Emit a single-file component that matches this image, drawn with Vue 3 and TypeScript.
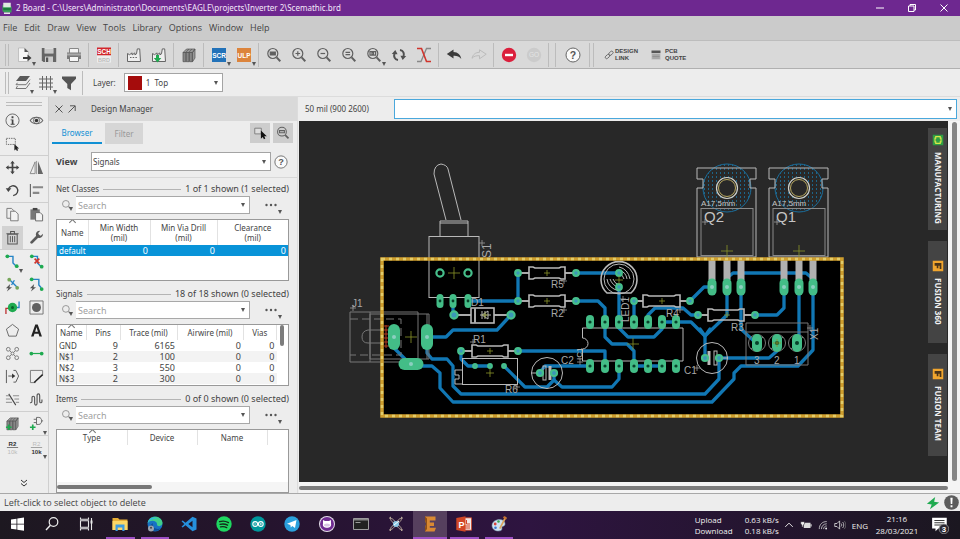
<script setup lang="ts">
import { ref } from 'vue'

interface Tool { id: string; label: string; caret?: boolean; active?: boolean }
interface Signal { name: string; pins: number; trace: number; airwire: number; vias: number }

const menus: string[] = ['File', 'Edit', 'Draw', 'View', 'Tools', 'Library', 'Options', 'Window', 'Help']

const lens = (inner: string): string =>
  `<g fill="none" stroke="#606060" stroke-width="1.2"><circle cx="6.8" cy="6.5" r="5"/><path d="M10.6 10.4L14.3 14.2" stroke-width="2"/>${inner}</g>`
const dot = (x: number, y: number, c = '#1faa50'): string => `<circle cx="${x}" cy="${y}" r="2" fill="${c}"/>`
const plus = '<path d="M1 12h6M4 9v6" stroke="#1faa50" stroke-width="1.8"/>'
const bolt = '<path d="M5.5 7.5L1 12h2.6L2 15.5 7.5 11H4.8z" fill="#555"/>'
const factory = 'M1.5 14.5v-8l2 1.2 2.6-1.8v2l2.8-2v2l1.6-1 .8-5h2.4l.8 12.6z'
const cube = '<path d="M2 5.5L5.5 2H14l-2.5 3.5zM11.5 5.5L14 2v9l-2.5 3.8z" fill="#999" stroke="#555" stroke-width=".7"/><path d="M2 5.5h2.8v9.2H2zM5.2 5.5H8v9.2H5.2zM8.5 5.5h2.8v9.2H8.5z" fill="#888" stroke="#505050" stroke-width=".7"/><path d="M5 5.2L8 2M8 5.2L11 2" stroke="#555" stroke-width=".7"/>'
const badge = (color: string, text: string): string =>
  `<path d="M1 1h14v14H1z" fill="${color}"/><text x="8" y="10.5" text-anchor="middle" font-size="6.5" font-weight="700" fill="#fff">${text}</text>`

const icons: Record<string, string> = {
  new: '<path d="M2.5 1h6l4 4v9.500h-10z" fill="#f5f5f5" stroke="#aaa" stroke-width=".6"/><path d="M8.500 1l4 4h-4z" fill="#555"/><path d="M7 10h4.500V7.500L15.500 11l-4 3.300V12H7z" fill="#3c3c3c"/>',
  save: '<path d="M.8 1h14.400v14H2.300L.8 13.500z" fill="#666"/><path d="M3.500 1h9v5.500h-9z" fill="#ddd"/><path d="M3.500 3h9M3.500 5h9" stroke="#999" stroke-width=".6"/><path d="M4 9.500h8V15H4z" fill="#ccc"/><path d="M5 10.500h2.200V15H5z" fill="#555"/>',
  print: '<path d="M3.500 1.500h9v5h-9z" fill="#f4f4f4" stroke="#888"/><path d="M1 5.500h14V12H1z" fill="#7a7a7a"/><path d="M1 6.500h14v2H1z" fill="#aaa"/><path d="M3.500 9.500h9v5h-9z" fill="#f6f6f6" stroke="#777"/>',
  sch: '<path d="M1 .5h14v8H1z" fill="#d2262b"/><path d="M1 8.500h14v7H1z" fill="#eee"/><text x="8" y="7" text-anchor="middle" font-size="6.500" font-weight="700" fill="#fff">SCH</text><text x="8" y="14.500" text-anchor="middle" font-size="5.500" font-weight="700" fill="#bbb">BRD</text>',
  fab: `<path d="${factory}" fill="#eee" stroke="#666"/><path d="M4 10.500h7" stroke="#666" stroke-dasharray="1.500 1.200"/>`,
  fabDown: `<path d="${factory}" fill="#eee" stroke="#666"/><path d="M5 8h3v3h2.300L6.500 15.500 2.800 11H5z" fill="#1faa50"/>`,
  library: cube,
  scr: badge('#2272b9', 'SCR'),
  ulp: badge('#dc843c', 'ULP'),
  zoomFit: lens('<path d="M4.300 5h5v3h-5z" fill="#606060"/>'),
  zoomIn: lens('<path d="M4.500 6.500h4.600M6.800 4.200v4.600"/>'),
  zoomOut: lens('<path d="M4.500 6.500h4.600"/>'),
  zoomRedraw: lens('<path d="M4.500 5.400h4.600M4.500 7.700h4.600"/>'),
  zoomSelect: lens('<path d="M4 4.700h5.600v3.500H4z" /><path d="M6 5.500h1.500v1.800H6z"/>'),
  refresh: '<g fill="none" stroke="#505050" stroke-width="2"><path d="M7 13C3.500 12.500 2.500 9.500 3.500 6.500M9 3c3.500.5 4.500 3.500 3.500 6.500"/></g><path d="M.8 7L4.300 3l2.300 4.300zM15.200 9l-3.500 4-2.300-4.300z" fill="#505050"/>',
  ratsnest: '<g fill="none" stroke-width="1.300"><path d="M1 14.500h4L10.500 1.500H15" stroke="#888"/><path d="M1 1.500h4.500l5 13H15" stroke="#d0342c" stroke-width="1.600"/></g>',
  undo: '<path d="M.8 7L7.500 2.500V5c4.500.3 7 2.500 7.800 7-2-2.600-4.200-3.300-7.800-3.200v2.700z" fill="#3c3c3c"/>',
  redo: '<path d="M15.200 7.200L8.500 2.800V5.300c-4 .2-6.500 2-7.500 6 2-2.200 4-2.700 7.500-2.600v3.100z" fill="none" stroke="#bbb"/>',
  stop: '<circle cx="8" cy="8" r="7.200" fill="#db1f3c"/><path d="M4 6.800h8v2.400H4z" fill="#fff"/>',
  go: '<circle cx="8" cy="8" r="7.200" fill="#cbcbcb"/><text x="8" y="10.300" text-anchor="middle" font-size="6.500" fill="#e4e4e4">GO</text>',
  help: '<circle cx="8" cy="8" r="7" fill="#fafafa" stroke="#666"/><text x="8" y="11.800" text-anchor="middle" font-size="10.500" font-weight="700" fill="#555">?</text>',
  link: '<g fill="none" stroke="#666" stroke-width="1.400"><rect x="7" y="3" width="8" height="4.500" rx="2.200" transform="rotate(-42 11 5.200)"/><rect x="1.500" y="8.200" width="8" height="4.500" rx="2.200" transform="rotate(-42 5.500 10.400)"/></g>',
  quote: '<path d="M2 2h12v3.500H2z" fill="#555"/><path d="M2 6h12v8H2z" fill="#bbb"/><path d="M3 8h10M3 10h10M3 12h10" stroke="#777" stroke-width=".8"/>',
  layers: '<path d="M5 1h10l-4 5H1z" fill="#5a5a5a"/><path d="M2.500 7.800L1 9.700h10L15 4.500" fill="none" stroke="#777"/><path d="M2.500 11L1 13.500h10L15 8" fill="none" stroke="#777"/>',
  grid: '<path d="M4.500 1v14M8.500 1v14M12.500 1v14M1 4h14M1 8h14M1 12h14" stroke="#666" stroke-width="1" fill="none"/>',
  filter: '<path d="M1 1.500h14v2.300L10 9v6.200L6.300 13V9L1 3.800z" fill="#555"/>',
  info: '<circle cx="8" cy="8" r="7" fill="none" stroke="#666"/><path d="M7 3.500h2v2H7zM6 6.800h3v4.700h1.300v1H6v-1h1.200V7.800H6z" fill="#444"/>',
  show: '<path d="M1.300 8C4 3.500 12 3.500 14.700 8 12 12.500 4 12.500 1.300 8z" fill="none" stroke="#666" stroke-width="1.100"/><circle cx="8" cy="8" r="3.300" fill="none" stroke="#666"/><circle cx="8" cy="8" r="1.900" fill="#333"/>',
  group: '<path d="M1.500 2.500h9.500v6.500H1.500z" fill="none" stroke="#666" stroke-dasharray="1.500 1"/><path d="M10 8.500v7l1.700-1.500 1 2 1.300-.7-1-1.900h2z" fill="#222"/>',
  move: '<path d="M8 .8l2.400 3H8.900v3.300h3.300V5.600l3 2.400-3 2.400V8.900H8.900v3.300h1.500l-2.400 3-2.400-3h1.500V8.900H3.800v1.500L.8 8l3-2.400v1.500h3.300V3.800H5.600z" fill="#444"/>',
  mirror: '<path d="M6.500 2v12.500H1.200z" fill="none" stroke="#888"/><path d="M9.500 1v14h5.500z" fill="#666"/><path d="M8 1v14" stroke="#777" stroke-width=".7"/>',
  rotate: '<path d="M3.500 6.500C5 2.500 10 1.800 12.500 4.800c2.600 3.400.6 8.200-3.800 8.700" fill="none" stroke="#444" stroke-width="1.400"/><path d="M.8 5.500h6l-3.300 4z" fill="#444"/>',
  align: '<path d="M1.500 1v14" stroke="#666" stroke-width="1.200"/><path d="M4 4.500h11M4 10.500h7" stroke="#888" stroke-width="2.200"/>',
  copy: '<path d="M2 1.500h5l2.500 2.500v8H2z" fill="#eee" stroke="#777"/><path d="M6 4.500h5L14 7.500v7.200H6z" fill="#f2f2f2" stroke="#777"/>',
  paste: '<path d="M1.500 2.500h10v11h-10z" fill="#777"/><path d="M4 1h5v2.500H4z" fill="#444"/><path d="M7 6h5l2.500 2.500v6.300H7z" fill="#f2f2f2" stroke="#666"/>',
  trash: '<path d="M3 4.500h10V15H3zM1.500 4h13M6 3.500V1.500h4v2" fill="none" stroke="#555" stroke-width="1.100"/><path d="M5.700 6.500v6.500M8 6.500v6.500M10.300 6.500v6.500" stroke="#555"/>',
  wrench: '<path d="M2.800 13.200l7-7" stroke="#5a5a5a" stroke-width="3" stroke-linecap="round"/><path d="M14.800 4a3.800 3.800 0 1 1-3-3L9.800 3.200l.6 2.200 2.200.6z" fill="#5a5a5a"/>',
  route: `<path d="M2.500 2.500h6v7l4 4" fill="none" stroke="#2484c6" stroke-width="1.500"/>${dot(2.5, 2.500)}${dot(12.500, 13)}`,
  ripup: `<path d="M3 2.500h6v7l4 4" fill="none" stroke="#2484c6" stroke-width="1.500"/>${dot(3, 2.500)}${dot(13.500, 13.500)}<path d="M6 5l5 5M11 5l-5 5" stroke="#d0342c" stroke-width="1.800"/>`,
  autoroute: `<path d="M5 3l8 8M10 3.500l-3 5" fill="none" stroke="#2484c6" stroke-width="1.400"/>${dot(4.500, 2.800, '#76a65a')}${dot(13, 11.500, '#76a65a')}${bolt}`,
  quickroute: `<path d="M3 2.500h7.500v6l2.500 3" fill="none" stroke="#2484c6" stroke-width="1.500"/>${dot(2.800, 2.500)}${dot(13.500, 12.800)}${bolt}`,
  via: '<path d="M1 15V9h5" fill="none" stroke="#b33" stroke-width="1.400"/><path d="M15 1.500V8h-4" fill="none" stroke="#2484c6" stroke-width="1.400"/><circle cx="8" cy="8" r="5" fill="#1faa50"/><circle cx="8" cy="8" r="1.600" fill="#06622a"/>',
  hole: '<path d="M1 1h14v14H1z" fill="none" stroke="#666" stroke-width=".9"/><circle cx="8" cy="8" r="4.800" fill="#606060"/>',
  polygon: '<path d="M8 1.500l6.500 5L12 14H4L1.500 6.500z" fill="none" stroke="#666"/>',
  text: '<path d="M2.200 14.500L6.700 1.500h2.600l4.500 13h-2.700l-.9-3H5.800l-.9 3zM6.500 9.200h3L8 4.500z" fill="#222" fill-rule="evenodd"/>',
  fanout: '<g fill="none" stroke="#777"><circle cx="3.500" cy="3.500" r="2"/><circle cx="12.500" cy="3.500" r="2"/><circle cx="3.500" cy="12.500" r="2"/><circle cx="12.500" cy="12.500" r="2"/><circle cx="8" cy="8" r="1.600"/><path d="M5 5l2 2M11 5L9 7M5 11l2-2M11 11L9 9"/></g>',
  airwire: `<path d="M2.500 8h11" stroke="#1faa50" stroke-width="1.300"/>${dot(2.500, 8)}${dot(13.500, 8)}`,
  split: '<path d="M1.500 1v14M3.500 7.500h5M9 1.500h2.500l3 6-3 6.500H9" fill="none" stroke="#555"/><path d="M7.500 4.800l3.500 2.700-3.500 2.700z" fill="#333"/>',
  miter: '<path d="M14.500 7V1.500h-13v13H7" fill="none" stroke="#777"/><path d="M5.500 14.500L14.500 6" stroke="#222" stroke-width="1.500"/>',
  diffpair: '<path d="M1 4h3.500M8.500 4H15M1 7.500h5M10 7.500h5M1 11h6.500M11.500 11H15" stroke="#888"/><path d="M4 2l7.500 12" stroke="#444" stroke-width="1.100"/>',
  meander: '<path d="M1 11.500h.7q1.500 0 1.500-2V6.500q0-2 1.400-2t1.400 2v5.500q0 2 1.300 2t1.300-2V4q0-2 1.400-2t1.400 2v6q0 1.500 1.200 1.500t1.200-1.500V8" fill="none" stroke="#555" stroke-width="1.200"/>',
  addPart: `${cube}${plus}`,
  addGate: `<path d="M8 1.500h2.500c4 0 4 7.500 0 7.500H8zM5 3.500h3M5 7h3M13.500 5.200H15" fill="none" stroke="#666"/>${plus}`,
  name: '<text x="8" y="6.500" text-anchor="middle" font-size="6.500" font-weight="700" fill="#333">R2</text><path d="M2 8h12" stroke="#555" stroke-width=".8"/><text x="8" y="15" text-anchor="middle" font-size="6.500" fill="#bbb">10k</text>',
  value: '<text x="8" y="6.500" text-anchor="middle" font-size="6.500" fill="#bbb">R2</text><path d="M2 8h12" stroke="#888" stroke-width=".8"/><text x="8" y="15" text-anchor="middle" font-size="6.500" font-weight="700" fill="#333">10k</text>',
  pick: '<path d="M2 2.500h7.500v6.500H2z" fill="#ddd" stroke="#777"/><path d="M9 5v9.500l2.200-2 1.300 2.700 1.600-.8-1.300-2.600h3z" fill="#111"/>',
  zoomPick: lens('<path d="M4 5.300h5.600v2.300H4z" />'),
  search: '<circle cx="6.500" cy="6.500" r="4.500" fill="none" stroke="#888" stroke-width="1.100"/><path d="M10 10l3.500 3.500" stroke="#888" stroke-width="1.500"/>',
  start: '<path d="M2 3.500L7.500 2.700v5H2zM8.300 2.600L15 1.600v6.100H8.300zM2 8.500h5.500v5L2 12.700zM8.300 8.500H15v6.200l-6.700-1z" fill="#fff"/>',
  find: '<circle cx="9.500" cy="6" r="4.300" fill="none" stroke="#eee" stroke-width="1.200"/><path d="M6.400 9.200L2 14" stroke="#eee" stroke-width="1.400"/>',
  tasks: '<path d="M2.500 4.800h8v6.500h-8zM2.500 1.500v1.700h8V1.500M2.500 14.500v-1.700h8v1.700M13.500 2v12" fill="none" stroke="#e8e8e8" stroke-width="1.100"/><path d="M12.500 4.500h2v3h-2z" fill="#e8e8e8"/>',
  explorer: '<path d="M.5 2h5.500l1.500 1.500h8V14H.5z" fill="#e8ae35"/><path d="M.5 5h15v9H.5z" fill="#fcd766"/><path d="M3.500 8.500h9V15H10.300v-3.500H5.700V15H3.500z" fill="#3d9be0"/>',
  edge: '<circle cx="8" cy="8" r="7.500" fill="#1672c4"/><path d="M.7 7C1.500-1.500 14.500-1 15.500 6.500c.3 4-4.500 4.500-5.500 2.500C11 5 4 3 .7 7z" fill="#41cf8c"/><path d="M.7 7C1.500 2 7 .5 10.500 2.500 6.500 2 2.500 4 .7 7z" fill="#2fb6e8"/><path d="M6 7c-1.500 5 4 7.500 8 5C10 17 3 15 3 9.500z" fill="#0c4f98"/><circle cx="4" cy="12.500" r="3" fill="#9aa4b0"/><circle cx="4" cy="11.700" r="1" fill="#444"/>',
  vscode: '<path d="M11.500.8L15.500 2.500v11l-4 1.700L4.500 9.300 1.700 11.500.5 10.700 3.300 8 .5 5.300l1.200-.8L4.500 6.700z" fill="#2690dc"/><path d="M11.500 4.800v6.400L7.300 8z" fill="#1f1427"/>',
  spotify: '<circle cx="8" cy="8" r="7.700" fill="#1ed760"/><path d="M3.500 5.700c3-.9 6.300-.6 9 .9M4 8.400c2.600-.7 5.300-.4 7.600.8M4.500 10.900c2.200-.5 4.300-.3 6.200.7" fill="none" stroke="#152b1b" stroke-width="1.300" stroke-linecap="round"/>',
  arduino: '<circle cx="8" cy="8" r="7.700" fill="#00979c"/><g fill="none" stroke="#fff" stroke-width="1.100"><circle cx="5.200" cy="8" r="2.400"/><circle cx="10.800" cy="8" r="2.400"/><path d="M4.200 8h2M9.800 8h2M10.800 7v2" stroke-width=".7"/></g>',
  telegram: '<circle cx="8" cy="8" r="7.700" fill="#2ba0dc"/><path d="M3 7.800l9.500-3.700-1.500 8-2.700-2-1.500 1.400-.4-2.600z" fill="#fff"/>',
  github: '<circle cx="8" cy="8" r="8" fill="#e6e0ec"/><circle cx="8" cy="8" r="7" fill="#6f2c91"/><path d="M4 4l2 1h4l2-1v3.500c.7 3-1.500 4.200-4 4.200S3.300 10.500 4 7.500z" fill="#fff"/><ellipse cx="8" cy="9" rx="3" ry="1.600" fill="#d8c4e4"/>',
  cmd: '<path d="M.5 2.500h15v11H.5z" fill="#222" stroke="#aaa" stroke-width=".9"/><path d="M1 3h14v1.500H1z" fill="#888"/><path d="M2.500 6.500h5" stroke="#aaa" stroke-width=".9"/>',
  atom: '<g fill="none" stroke="#b9a89b" stroke-width="1"><path d="M1 2c4 0 6 3 7 6s4 6 7 6M15 2c-4 0-6 3-7 6s-4 6-7 6M2.500.8C2 5 5 7 8 8s6 3 5.500 7M13.500.8C14 5 11 7 8 8s-6 3-5.500 7"/></g><circle cx="8" cy="8" r="3" fill="#8cc7e4"/><path d="M6 9l5-4" stroke="#fff"/>',
  eagle: '<path d="M3 .5h10.500v4H7.800v2H12v3.500H7.800v1.800H14L12.500 15.500H3V12L4.200 8 3 4z" fill="#d98932"/><path d="M3 .5l2 2v10.500l-2 2.500V12L4.200 8 3 4z" fill="#8e4f17"/>',
  ppt: '<path d="M6 1.800h9.500v12.400H6z" fill="#f4e9e6" stroke="#d24726" stroke-width=".8"/><path d="M10.500 4v4h3.500M9 10h5M9 12h5" stroke="#d24726" fill="none"/><path d="M.3 2L9.500.3v15.400L.3 14z" fill="#d24726"/><text x="2.400" y="11.500" font-size="9" font-weight="700" fill="#fff">P</text>',
  paint: '<path d="M1 9.500C1 3.500 11 1.500 13.500 6c1.500 3-.5 4-2 4.500s.5 2.500-1.500 4C6 16 1 14 1 9.500z" fill="#cfe3f2" stroke="#7a97ad" stroke-width=".6"/><circle cx="4.200" cy="8" r="1.400" fill="#d8433b"/><circle cx="7.500" cy="5.500" r="1.300" fill="#3aa655"/><circle cx="4.500" cy="11.700" r="1.300" fill="#3a78d0"/><path d="M14 .5l1.500 1-6 11.500-1.500-.8z" fill="#d9a55d"/><path d="M12.500.8l3 2" stroke="#c6702f" stroke-width="2"/>',
  up: '<path d="M2 11l6-6 6 6" fill="none" stroke="#eee" stroke-width="1.500"/>',
  battery: '<path d="M5 5h9v7H5z" fill="#ddd"/><path d="M14 7h1.500v3H14z" fill="#ddd"/><path d="M1 3.500h5v3L4.500 8v2.500h-2V8L1 6.500z" fill="#eee" stroke="#1f1725" stroke-width=".7"/>',
  wifi: '<g fill="none" stroke="#ddd" stroke-width="1.200"><path d="M2 14.500C2 7 7 2.500 14 2.500M5.500 14.500c0-5 3.500-8.300 8.500-8.500M9 14.500c0-3 2-5 5-5"/></g><circle cx="13" cy="13.500" r="1.500" fill="#eee"/>',
  volume: '<path d="M1 6h3l3.500-3.500v11L4 10H1z" fill="none" stroke="#ddd" stroke-width="1.100"/><path d="M9.500 6c1 1 1 3 0 4M11.500 4c2 2 2 6 0 8" fill="none" stroke="#ddd"/><path d="M13.500 2.500c3 3 3 8 0 11" fill="none" stroke="#777"/>',
  notes: '<path d="M1 1.500h13v9.500H6.500L4 13.500V11H1z" fill="#fff"/><path d="M3 4h9M3 6h9M3 8h7" stroke="#222" stroke-width=".8"/><circle cx="11.500" cy="11.500" r="4.300" fill="#2b2730" stroke="#999" stroke-width=".7"/><text x="11.500" y="14" text-anchor="middle" font-size="7" font-weight="700" fill="#fff">3</text>',
  flash: '<path d="M10.500 1L1 8.800l5.500.8L4.500 15 15 7.500l-5.700-.8z" fill="#1faa50"/>',
  alert: '<circle cx="8" cy="8" r="7.800" fill="#5c5c5c"/><path d="M6.800 2.800h2.400L8.800 9.500H7.200zM7 11h2v2H7z" fill="#fff"/>',
  app: '<path d="M2 4h9l3 2v8H4l-2-2z" fill="#3aa05a"/><path d="M3 1h10v6H3z" fill="#dfe9e0"/><path d="M4 14h8v2H4z" fill="#e8e8e8"/><path d="M3 8h10v3H3z" fill="#1c7a3b"/>',
  fusion: '<path d="M1 1h14v14H1z" fill="#f0a52e"/><path d="M12.500 4v8h-2.300V7.500H8.500V11H6.300V7.500H3.500V4z" fill="#4a3418"/>',
  mfg: '<path d="M1 1h14v14H1z" fill="#2f9e44"/><path d="M5 3.500h6v2h1v5h-1v2H5v-2H4v-5h1z" fill="none" stroke="#d9e64a" stroke-width="1.500"/>',
}

const toolbar: Tool[][] = [
  [{ id: 'new', label: 'New', caret: true }, { id: 'save', label: 'Save' }, { id: 'print', label: 'Print' }],
  [{ id: 'sch', label: 'Switch to schematic' }],
  [{ id: 'fab', label: 'Generate CAM data' }, { id: 'fabDown', label: 'Export CAM data' }],
  [{ id: 'library', label: 'Library manager' }],
  [{ id: 'scr', label: 'Run script', caret: true }, { id: 'ulp', label: 'Run ULP', caret: true }],
  [
    { id: 'zoomFit', label: 'Zoom to fit' }, { id: 'zoomIn', label: 'Zoom in' }, { id: 'zoomOut', label: 'Zoom out' },
    { id: 'zoomRedraw', label: 'Redraw' }, { id: 'zoomSelect', label: 'Zoom select', caret: true },
    { id: 'refresh', label: 'Refresh' }, { id: 'ratsnest', label: 'Ratsnest' },
  ],
  [{ id: 'undo', label: 'Undo' }, { id: 'redo', label: 'Redo' }],
  [{ id: 'stop', label: 'Stop' }, { id: 'go', label: 'Go' }],
]

const palette: (Tool | null)[][] = [
  [{ id: 'info', label: 'Info' }, { id: 'show', label: 'Show' }, { id: 'group', label: 'Group' }, null],
  [{ id: 'move', label: 'Move' }, { id: 'mirror', label: 'Mirror' }, { id: 'rotate', label: 'Rotate' }, { id: 'align', label: 'Align' }],
  [{ id: 'copy', label: 'Copy' }, { id: 'paste', label: 'Paste' }, { id: 'trash', label: 'Delete', active: true }, { id: 'wrench', label: 'Change' }],
  [
    { id: 'route', label: 'Route', caret: true }, { id: 'ripup', label: 'Ripup' },
    { id: 'autoroute', label: 'Autoroute' }, { id: 'quickroute', label: 'Quickroute' },
    { id: 'via', label: 'Via' }, { id: 'hole', label: 'Hole' },
    { id: 'polygon', label: 'Polygon' }, { id: 'text', label: 'Text' },
    { id: 'fanout', label: 'Fanout' }, { id: 'airwire', label: 'Airwire' },
    { id: 'split', label: 'Split' }, { id: 'miter', label: 'Miter' },
    { id: 'diffpair', label: 'Slice' }, { id: 'meander', label: 'Meander' },
  ],
  [{ id: 'addPart', label: 'Add part' }, { id: 'addGate', label: 'Add gate', caret: true }],
  [{ id: 'name', label: 'Name' }, { id: 'value', label: 'Value', caret: true }],
]

const signals: Signal[] = [
  { name: 'GND', pins: 9, trace: 6165, airwire: 0, vias: 0 },
  { name: 'N$1', pins: 2, trace: 100, airwire: 0, vias: 0 },
  { name: 'N$2', pins: 3, trace: 550, airwire: 0, vias: 0 },
  { name: 'N$3', pins: 2, trace: 300, airwire: 0, vias: 0 },
]

const tasks = [
  { id: 'start', label: 'Start' }, { id: 'find', label: 'Search' }, { id: 'tasks', label: 'Task view' },
  { id: 'explorer', label: 'File Explorer', open: true }, { id: 'edge', label: 'Edge', open: true },
  { id: 'vscode', label: 'Visual Studio Code' }, { id: 'spotify', label: 'Spotify' }, { id: 'arduino', label: 'Arduino' },
  { id: 'telegram', label: 'Telegram' }, { id: 'github', label: 'GitHub Desktop' }, { id: 'cmd', label: 'Terminal' },
  { id: 'atom', label: 'Simulator' }, { id: 'eagle', label: 'EAGLE', current: true }, { id: 'ppt', label: 'PowerPoint', open: true },
  { id: 'paint', label: 'Paint', open: true },
]

const sideTabs = [
  { icon: 'mfg', label: 'MANUFACTURING' },
  { icon: 'fusion', label: 'FUSION 360' },
  { icon: 'fusion', label: 'FUSION TEAM' },
]

const command = ref('')
const netFilter = ref('')
const signalFilter = ref('')
const itemFilter = ref('')

// Board geometry, in drawing units
const traces: string[] = [
  '468,301 518,301 518,273', '453,301 453,315', '576,273 619,273',
  '619,287 619,328 628,337 654,337 662,329 662,322',
  '576,301 598,301 605,308 605,337 612,344 627,344 634,351 634,366',
  '634,301 634,322', '690,301 704,287 712,287',
  '648,322 648,315 655,308 683,308 691,315 698,315',
  '662,322 691,322 705,336 705,358', '705,336 727,315 727,287', '700,329 705,336 710,329',
  '755,315 777,315 784,308 784,287',
  '727,287 727,278 733,273 806,273 813,279 813,350 798,366 741,366 734,373 734,379 712,402 453,402 440,388 440,373 432,366 411,366',
  '394,337 394,348 411,365',
  '719,358 719,379 705,394 461,394 453,386 453,366 447,359 432,359 427,353 427,337 446,337 453,330 497,330 511,315',
  '741,287 741,329 756,343', '799,287 799,343', '719,358 769,358 777,351',
  '590,366 545,366 540,372', '554,373 554,380 562,387 612,387 619,379 619,366',
  '504,366 525,387 547,387 554,380', '634,366 662,366',
  '518,351 605,351 605,366', '461,351 461,359 468,366 490,366',
]
const resistors = [
  { name: 'R5', x1: 518, x2: 576, y: 273, bx: 529, bw: 36, tx: 551, ty: 288 },
  { name: 'R2', x1: 518, x2: 576, y: 301, bx: 529, bw: 36, tx: 551, ty: 317 },
  { name: 'R4', x1: 634, x2: 690, y: 301, bx: 643, bw: 37, tx: 666, ty: 317 },
  { name: 'R3', x1: 698, x2: 755, y: 315, bx: 708, bw: 36, tx: 731, ty: 331 },
  { name: 'R1', x1: 461, x2: 518, y: 351, bx: 472, bw: 36, tx: 473, ty: 343 },
]
const longPads = [
  ...[590, 605, 619, 634, 648, 662, 676].flatMap((x) => [
    { x, y: 322, w: 8, h: 14, hole: 1.6 }, { x, y: 366, w: 8, h: 14, hole: 1.6 },
  ]),
  ...[440, 453, 468].map((x) => ({ x, y: 301, w: 7, h: 14, hole: 1.4 })),
  ...[712, 727, 741, 784, 799, 813].map((x) => ({ x, y: 287, w: 9, h: 17, hole: 2 })),
  ...[757, 777, 797].map((x) => ({ x, y: 343, w: 10, h: 18, hole: 2 })),
  { x: 394, y: 337, w: 12, h: 26, hole: 2 }, { x: 427, y: 337, w: 12, h: 26, hole: 2 },
  { x: 411, y: 364, w: 25, h: 12, hole: 2 },
]
const roundPads: [number, number, number][] = [
  [454, 315, 3.6], [511, 315, 3.6], [619, 273, 2.8], [619, 287, 2.8], [705, 358, 3], [719, 358, 3],
  [540, 373, 3], [554, 373, 3], [475, 366, 1.8], [490, 366, 1.8], [504, 366, 1.8], [440, 273, 3.6], [468, 273, 3.6],
]
const origins: [number, number, number][] = [
  [454, 273, 6], [547, 273, 3], [547, 301, 3], [662, 301, 3], [727, 315, 3], [490, 351, 3], [490, 373, 4],
  [411, 337, 6], [633, 344, 6], [619, 280, 4], [727, 251, 6], [799, 251, 6], [777, 343, 4], [485, 315, 3],
]
const anchors: [number, number][] = [
  [482, 243], [564, 281], [564, 310], [680, 310], [473, 342], [517, 387], [353, 308], [580, 362], [705, 222], [777, 222], [810, 328], [697, 368], [623, 299],
]
</script>

<template>
  <div class="app">
    <header class="titlebar">
      <svg class="i12" viewBox="0 0 16 16" v-html="icons.app"></svg>
      <h1>2 Board - C:\Users\Administrator\Documents\EAGLE\projects\Inverter 2\Scemathic.brd</h1>
      <div class="window-buttons">
        <button aria-label="Minimise"><svg class="i10" viewBox="0 0 10 10"><path d="M1 5h8" /></svg></button>
        <button aria-label="Restore"><svg class="i10" viewBox="0 0 10 10"><path d="M1.500 3h5.500v5.500H1.500zM3 3V1.500h5.500V7H7" /></svg></button>
        <button aria-label="Close"><svg class="i10" viewBox="0 0 10 10"><path d="M1.500 1.500l7 7M8.500 1.500l-7 7" /></svg></button>
      </div>
    </header>

    <nav class="menubar"><button v-for="m in menus" :key="m">{{ m }}</button></nav>

    <div class="toolbar">
      <span class="grip"></span>
      <div v-for="(g, gi) in toolbar" :key="gi" class="group">
        <button v-for="t in g" :key="t.id" :aria-label="t.label" class="tool">
          <svg class="i16" viewBox="0 0 16 16" v-html="icons[t.id]"></svg><i v-if="t.caret" class="caret corner"></i>
        </button>
      </div>
      <div class="group help-group">
        <button class="tool" aria-label="Help"><svg class="i16" viewBox="0 0 16 16" v-html="icons.help"></svg></button>
      </div>
      <button class="service first"><svg class="i10" viewBox="0 0 16 16" v-html="icons.link"></svg><span>DESIGN<br />LINK</span></button>
      <button class="service"><svg class="i12" viewBox="0 0 16 16" v-html="icons.quote"></svg><span>PCB<br />QUOTE</span></button>
    </div>

    <div class="layerbar">
      <span class="grip"></span>
      <div class="group">
        <button class="tool" aria-label="Layer settings"><svg class="i16" viewBox="0 0 16 16" v-html="icons.layers"></svg><i class="caret corner"></i></button>
        <button class="tool" aria-label="Grid"><svg class="i16" viewBox="0 0 16 16" v-html="icons.grid"></svg><i class="caret corner"></i></button>
        <button class="tool" aria-label="Selection filter"><svg class="i16" viewBox="0 0 16 16" v-html="icons.filter"></svg></button>
      </div>
      <label for="layer">Layer:</label>
      <div class="picker layer-picker">
        <span class="swatch"></span>
        <select id="layer"><option>1&nbsp; Top</option></select>
        <i class="caret"></i>
      </div>
    </div>

    <main class="workspace">
      <aside class="palette">
        <span class="hgrip"></span>
        <div v-for="(g, gi) in palette" :key="gi" class="tools">
          <template v-for="(t, ti) in g" :key="ti">
            <button v-if="t" :aria-label="t.label" class="tool" :class="{ active: t.active }">
              <svg class="i15" viewBox="0 0 16 16" v-html="icons[t.id]"></svg><i v-if="t.caret" class="caret corner"></i>
            </button>
            <span v-else></span>
          </template>
        </div>
        <button class="more" aria-label="More tools"><svg class="i8" viewBox="0 0 8 8"><path d="M1 1l3 2.500L7 1M1 4.500L4 7l3-2.500" /></svg></button>
      </aside>

      <section class="manager">
        <div class="manager-head">
          <button aria-label="Close panel"><svg class="i10" viewBox="0 0 10 10"><path d="M1.500 1.500l7 7M8.500 1.500l-7 7" /></svg></button>
          <button aria-label="Undock panel"><svg class="i10" viewBox="0 0 10 10"><path d="M1.500 8.500L8 2M3 1.800h5.200V7" /></svg></button>
          <h2>Design Manager</h2>
        </div>
        <div class="tabs">
          <button class="tab on">Browser</button>
          <button class="tab off">Filter</button>
          <span class="grow"></span>
          <button class="square" aria-label="Select in drawing"><svg class="i14" viewBox="0 0 16 16" v-html="icons.pick"></svg></button>
          <button class="square" aria-label="Zoom to selection"><svg class="i14" viewBox="0 0 16 16" v-html="icons.zoomPick"></svg></button>
        </div>
        <div class="view-row">
          <label for="view">View</label>
          <div class="picker"><select id="view"><option>Signals</option></select><i class="caret"></i></div>
          <button class="tool" aria-label="View help"><svg class="i14" viewBox="0 0 16 16" v-html="icons.help"></svg></button>
        </div>

        <div class="lists">
          <section class="block">
            <div class="legend"><h3>Net Classes</h3><hr /><span>1 of 1 shown (1 selected)</span></div>
            <div class="search">
              <label for="q-net"><svg class="i12" viewBox="0 0 16 16" v-html="icons.search"></svg><i class="caret corner"></i></label>
              <div class="box"><input id="q-net" v-model="netFilter" placeholder="Search" /><i class="caret"></i></div>
              <button class="dots" aria-label="Net class options"><svg viewBox="0 0 12 4"><circle cx="1.500" cy="2" r="1.200" /><circle cx="6" cy="2" r="1.200" /><circle cx="10.500" cy="2" r="1.200" /></svg><i class="caret corner"></i></button>
            </div>
            <div class="frame">
              <table class="nets">
                <colgroup><col class="c31" /><col class="c62" /><col class="c67" /><col /></colgroup>
                <thead><tr><th class="sorted">Name</th><th>Min Width<br />(mil)</th><th>Min Via Drill<br />(mil)</th><th>Clearance<br />(mil)</th></tr></thead>
                <tbody><tr class="picked"><td>default</td><td>0</td><td>0</td><td>0</td></tr></tbody>
              </table>
            </div>
          </section>

          <section class="block">
            <div class="legend"><h3>Signals</h3><hr /><span>18 of 18 shown (0 selected)</span></div>
            <div class="search">
              <label for="q-sig"><svg class="i12" viewBox="0 0 16 16" v-html="icons.search"></svg><i class="caret corner"></i></label>
              <div class="box"><input id="q-sig" v-model="signalFilter" placeholder="Search" /><i class="caret"></i></div>
              <button class="dots" aria-label="Signal options"><svg viewBox="0 0 12 4"><circle cx="1.500" cy="2" r="1.200" /><circle cx="6" cy="2" r="1.200" /><circle cx="10.500" cy="2" r="1.200" /></svg><i class="caret corner"></i></button>
            </div>
            <div class="frame side-scroll">
              <table class="signals">
                <colgroup><col class="c29" /><col class="c34" /><col class="c57" /><col class="c66" /><col /></colgroup>
                <thead><tr><th class="sorted">Name</th><th>Pins</th><th>Trace (mil)</th><th>Airwire (mil)</th><th>Vias</th></tr></thead>
                <tbody>
                  <tr v-for="s in signals" :key="s.name"><td>{{ s.name }}</td><td>{{ s.pins }}</td><td>{{ s.trace }}</td><td>{{ s.airwire }}</td><td>{{ s.vias }}</td></tr>
                </tbody>
              </table>
              <span class="vthumb"></span>
            </div>
          </section>

          <section class="block">
            <div class="legend"><h3>Items</h3><hr /><span>0 of 0 shown (0 selected)</span></div>
            <div class="search">
              <label for="q-item"><svg class="i12" viewBox="0 0 16 16" v-html="icons.search"></svg><i class="caret corner"></i></label>
              <div class="box"><input id="q-item" v-model="itemFilter" placeholder="Search" /><i class="caret"></i></div>
              <button class="dots" aria-label="Item options"><svg viewBox="0 0 12 4"><circle cx="1.500" cy="2" r="1.200" /><circle cx="6" cy="2" r="1.200" /><circle cx="10.500" cy="2" r="1.200" /></svg><i class="caret corner"></i></button>
            </div>
            <div class="frame bottom-scroll">
              <table class="items">
                <colgroup><col class="c70" /><col class="c70" /><col class="c70" /><col /></colgroup>
                <thead><tr><th class="sorted">Type</th><th>Device</th><th>Name</th><th></th></tr></thead>
              </table>
              <span class="htrack"><span class="hthumb"></span></span>
            </div>
          </section>
        </div>
      </section>

      <section class="editor">
        <div class="command">
          <label for="cmd">50 mil (900 2600)</label>
          <div class="box"><input id="cmd" v-model="command" /><i class="caret"></i></div>
        </div>
        <div class="canvas">
          <svg class="board" viewBox="299 121 649 361" preserveAspectRatio="xMidYMid slice" role="img" aria-label="Board layout">
            <defs>
              <pattern id="dots" width="4" height="4" patternUnits="userSpaceOnUse"><rect width="1" height="2" fill="#1d6488" /></pattern>
            </defs>
            <rect class="area" x="382" y="259" width="460" height="157" />
            <polyline v-for="(t, i) in traces" :key="'t' + i" class="trace" :points="t" />
            <path class="leg" d="M712 260v20M727 260v20M741 260v20M784 260v20M799 260v20M813 260v20" />

            <g class="silk">
              <path d="M446 220L434 174Q434 165 441 164Q447 165 448 169L461 220M440 236V221h28v15M440 223h28" />
              <rect x="429" y="236.500" width="50" height="61" />
              <g v-for="r in resistors" :key="r.name">
                <path class="lead" :d="`M${r.x1} ${r.y}H${r.bx}M${r.bx + r.bw} ${r.y}H${r.x2}`" />
                <path class="bold" :d="`M${r.bx} ${r.y - 6}h4l2 1h${r.bw - 12}l2-1h4v12h-4l-2-1h-${r.bw - 12}l-2 1h-4z`" />
              </g>
              <path class="lead" d="M454 315h17M494 315h17" />
              <rect class="bold" x="471" y="308" width="23" height="15" />
              <path class="lead" d="M475 308v15" />
              <path d="M488 311v8l-6-4zM482 311v8M480 315h11M485 311v8" />
              <path class="bold" d="M607 293a18 18 0 1 1 24 0z" />
              <circle cx="619" cy="279" r="15" />
              <path d="M619 267q9 2 11 12M619 270q7 2 8 9M619 273q4 2 5 6M607 279q1 9 12 12M610 279q2 6 9 9M613 279q1 4 6 6" />
              <path d="M582.500 328H683v33H582.500V349a5.500 5.500 0 0 0 0-11z" />
              <rect x="462.500" y="358.500" width="55" height="26" />
              <path d="M462 370h-7v5h4v4h-4v5h7" />
              <circle cx="547" cy="373" r="15.500" /><circle cx="712" cy="358" r="15.500" />
              <rect x="543" y="366" width="3" height="14" /><path class="plate" d="M550 366v14M709 351v14" />
              <rect x="714" y="351" width="3" height="14" />
              <path d="M531 373h8M719 358h9" />
              <g class="faint">
                <path d="M350 312h68v50h-68zM370 314h59v45h-59zM427 314v45M370 312v50" />
                <path stroke-dasharray="8 4" d="M350 319h51v36h-51" />
                <path d="M384 330h-16q-6 1-6 7t6 6h16" />
                <path d="M746 323h62v42h-62zM746 332h62" />
                <circle v-for="x in [757, 777, 797]" :key="x" :cx="x" cy="343" r="8.500" />
                <path d="M751 349l12-12M771 349l12-12M791 349l12-12" />
              </g>
              <g v-for="x in [697, 769]" :key="x">
                <circle class="keepout" :cx="x + 30" cy="188" r="24" />
                <path :d="`M${x} 168h59v11h-6v9h6v69h-59v-69h6v-9h-6z`" />
                <circle class="mount" :cx="x + 30" cy="188" r="10.500" />
                <circle class="bore" :cx="x + 30" cy="188" r="8.500" />
                <rect class="tabbox" :x="x + 4" y="208.500" width="52" height="47" />
              </g>
            </g>
            <path class="red" d="M384 326h5M384 330h5M384 334h5M384 338h5M384 342h5M384 346h5M386 325v23" />

            <rect v-for="(p, i) in longPads" :key="'l' + i" class="pad" :x="p.x - p.w / 2" :y="p.y - p.h / 2" :width="p.w" :height="p.h" :rx="Math.min(p.w, p.h) / 2" />
            <circle v-for="(p, i) in longPads" :key="'h' + i" class="drill" :class="{ light: p.hole === 2 && p.y !== 343 }" :cx="p.x" :cy="p.y" :r="p.hole" />
            <g v-for="r in resistors" :key="'p' + r.name">
              <circle class="ring" :cx="r.x1" :cy="r.y" r="2.800" /><circle class="ring" :cx="r.x2" :cy="r.y" r="2.800" />
            </g>
            <circle v-for="(p, i) in roundPads" :key="'r' + i" :class="i > 10 ? 'ring open' : 'ring'" :cx="p[0]" :cy="p[1]" :r="p[2]" />

            <path v-for="(o, i) in origins" :key="'o' + i" class="origin" :d="`M${o[0] - o[2]} ${o[1]}h${o[2] * 2}M${o[0]} ${o[1] - o[2]}v${o[2] * 2}`" />
            <path v-for="(o, i) in anchors" :key="'a' + i" class="anchor" :d="`M${o[0] - 3} ${o[1]}h6M${o[0]} ${o[1] - 3}v6`" />
            <rect class="outline" x="382" y="259" width="460" height="157" />
            <rect class="outline hatch" x="382" y="259" width="460" height="157" />

            <g class="names">
              <text v-for="r in resistors" :key="'n' + r.name" :x="r.tx" :y="r.ty">{{ r.name }}</text>
              <text x="471" y="306">D1</text><text x="505" y="393">R6</text><text x="561" y="364">C2</text>
              <text x="684" y="374">C1</text><text x="352" y="307">J1</text>
              <text class="mid" transform="translate(491 258) rotate(-90)">S1</text>
              <text transform="translate(629 322) rotate(-90)">LED1</text>
              <text class="small" transform="translate(582 360) rotate(-90)">IC1</text>
              <text transform="translate(818 340) rotate(-90)">X1</text>
              <text x="754" y="364">3</text><text x="774" y="364">2</text><text x="794" y="364">1</text>
              <text class="big" x="704" y="222">Q2</text><text class="big" x="776" y="222">Q1</text>
              <text class="small" x="701" y="206">A17,5mm</text><text class="small" x="772" y="206">A17,5mm</text>
            </g>
          </svg>
          <div class="side-tabs">
            <button v-for="s in sideTabs" :key="s.label"><svg class="i12" viewBox="0 0 16 16" v-html="icons[s.icon]"></svg>{{ s.label }}</button>
          </div>
        </div>
        <span class="vbar"></span>
        <span class="hbar"></span>
      </section>
    </main>

    <footer class="status">
      <p>Left-click to select object to delete</p>
      <svg class="i14" viewBox="0 0 16 16" v-html="icons.flash"></svg>
      <svg class="i15" viewBox="0 0 16 16" v-html="icons.alert"></svg>
    </footer>

    <footer class="taskbar">
      <div class="apps">
        <button v-for="t in tasks" :key="t.id" :aria-label="t.label" :class="{ open: t.open, current: t.current }">
          <svg class="i16" viewBox="0 0 16 16" v-html="icons[t.id]"></svg>
        </button>
      </div>
      <dl class="net"><dt>Upload</dt><dd>0.63 kB/s</dd><dt>Download</dt><dd>0.18 kB/s</dd></dl>
      <div class="tray">
        <svg class="i10" viewBox="0 0 16 16" v-html="icons.up"></svg>
        <svg class="i12" viewBox="0 0 16 16" v-html="icons.battery"></svg>
        <svg class="i10" viewBox="0 0 16 16" v-html="icons.wifi"></svg>
        <svg class="i12" viewBox="0 0 16 16" v-html="icons.volume"></svg>
        <span>ENG</span>
      </div>
      <time>21:16<br />28/03/2021</time>
      <button class="notes" aria-label="Notifications"><svg class="i18" viewBox="0 0 16 16" v-html="icons.notes"></svg></button>
    </footer>
  </div>
</template>

<style>
body { margin: 0; overflow: hidden; }
</style>

<style scoped>
* { box-sizing: border-box; }
.app {
  display: flex; flex-direction: column; height: 100vh;
  font: 9px/12px "Noto Sans", "Open Sans", sans-serif; color: #444; background: #ededed;
}
button, input, select { font: inherit; color: inherit; border: 0; background: none; padding: 0; margin: 0; outline: 0; border-radius: 0; }
h1, h2, h3, p, hr, dl, dd { margin: 0; font-size: inherit; font-weight: 400; }
svg { display: block; flex: none; font-family: "Liberation Sans", sans-serif; }
.i8 { width: 8px; height: 8px; } .i10 { width: 10px; height: 10px; } .i12 { width: 12px; height: 12px; }
.i14 { width: 14px; height: 14px; } .i15 { width: 15px; height: 15px; } .i16 { width: 16px; height: 16px; } .i18 { width: 18px; height: 18px; }
.caret { width: 0; height: 0; border: 2px solid transparent; border-top: 4px solid #555; border-bottom: 0; }
.corner { position: absolute; right: 0; bottom: 0; }
.grow { flex: 1; }

.titlebar { display: flex; align-items: center; height: 16px; padding-left: 1px; gap: 3px; background: #6e2890; color: #f4e9fa; font-size: 8px; }
.titlebar h1 { flex: 1; }
.window-buttons { display: flex; }
.window-buttons button { width: 32px; height: 16px; display: grid; place-items: center; }
.window-buttons path { fill: none; stroke: #fff; }

.menubar { display: flex; align-items: center; gap: 7px; height: 25px; padding: 0 3px; background: #cbcbcb; font: 9px/16px "Open Sans", sans-serif; border-bottom: 1px solid #bdbdbd; }

.toolbar, .layerbar { display: flex; align-items: center; height: 28px; background: #d9d9d9; border-bottom: 1px solid #b0b0b0; }
.layerbar { background: #ededed; border-color: #dcdcdc; }
.grip { width: 4px; height: 22px; margin: 0 0 0 5px; border: 1px solid #bcbcbc; border-width: 0 1px; }
.group { display: flex; align-items: center; height: 24px; padding: 0 2px; border-right: 1px solid #bcbcbc; }
.tool { position: relative; width: 25px; height: 23px; display: grid; place-items: center; }
.help-group { margin: 0 3px 0 6px; padding: 0 4px; border-left: 1px solid #bcbcbc; }
.service { display: flex; align-items: center; gap: 3px; height: 24px; padding: 0 2px 0 10px; font: 700 6px/7px "Liberation Sans", sans-serif; text-align: left; }
.service.first { gap: 1px; border-left: 1px solid #bcbcbc; }
.layerbar label { padding: 0 8px 0 10px; font-size: 8px; }
.layerbar .tool { width: 23px; }
.picker { display: flex; align-items: center; gap: 4px; height: 19px; padding: 0 4px 0 3px; background: #fff; border: 1px solid #a4a4a4; }
.picker select { flex: 1; min-width: 0; appearance: none; font-size: 8px; }
.layer-picker { width: 99px; }
.swatch { width: 14px; height: 14px; background: #a50c0c; }

.workspace { display: flex; flex: 1; min-height: 0; }
.palette { width: 49px; display: flex; flex-direction: column; border-right: 1px solid #cfcfcf; }
.hgrip { height: 4px; margin: 5px 6px 3px; border: 1px solid #bcbcbc; border-width: 1px 0; }
.tools { display: grid; grid-template-columns: 1fr 1fr; justify-items: center; padding-left: 1px; border-bottom: 1px solid #cfcfcf; }
.tools:nth-of-type(6) { border-bottom: 0; }
.palette .tool { width: 21px; }
.tool.active { background: #d2d2d2; }
.more { display: grid; place-items: center; height: 20px; margin-top: 14px; }
.more path { fill: none; stroke: #333; }

.manager { width: 249px; display: flex; flex-direction: column; border-right: 1px solid #dcdcdc; }
.manager-head { display: flex; align-items: center; gap: 3px; height: 24px; padding-left: 5px; background: #d9d9d9; }
.manager-head path { fill: none; stroke: #555; stroke-width: 1; }
.manager-head h2 { padding-left: 11px; font-size: 8px; }
.tabs { display: flex; gap: 3px; padding: 2px 4px 0 3px; }
.tab { height: 21px; font-size: 8px; }
.tab.on { width: 50px; color: #1090d4; border-bottom: 2px solid #1090d4; }
.tab.off { width: 38px; color: #999; background: #d6d6d6; }
.square { width: 20px; height: 20px; display: grid; place-items: center; background: #cdcdcd; }
.view-row { display: flex; align-items: center; height: 34px; padding: 2px 6px 0 7px; border-bottom: 1px solid #d8d8d8; }
.view-row label { width: 35px; font-weight: 700; }
.view-row .picker { flex: 1; padding-left: 1px; }
.view-row .tool { width: 20px; }
.lists { flex: 1; display: flex; flex-direction: column; gap: 6px; padding: 4px 8px 0 7px; min-height: 0; }
.block { display: flex; flex-direction: column; }
.block:last-child { flex: 1; }
.legend { display: flex; align-items: center; gap: 4px; height: 14px; }
.legend h3 { font-size: 8px; }
.legend hr { flex: 1; border: 0; border-top: 1px solid #b4b4b4; }
.search { display: flex; align-items: center; height: 18px; }
.search label { position: relative; width: 12px; margin: 0 3px 0 5px; }
.box { display: flex; align-items: center; height: 18px; flex: 1; min-width: 0; padding: 0 4px 0 2px; background: #fff; border: 1px solid #a8a8a8; border-left: 0; }
.box input { flex: 1; min-width: 0; height: 16px; }
.box input::placeholder { color: #a0a0a0; opacity: 1; }
.dots { position: relative; display: grid; align-items: center; width: 17px; height: 18px; margin: 0 7px 0 15px; }
.dots svg { width: 12px; height: 4px; fill: #555; }
.frame { display: flex; height: 62px; margin-top: 5px; background: #fff; border: 1px solid #999; overflow: hidden; }
.bottom-scroll { flex: 1; flex-direction: column; justify-content: space-between; }
table { width: 100%; border-collapse: collapse; table-layout: fixed; align-self: flex-start; }
.c29 { width: 29px; } .c31 { width: 31px; } .c34 { width: 34px; } .c57 { width: 57px; } .c62 { width: 62px; } .c66 { width: 66px; } .c67 { width: 67px; } .c70 { width: 70px; }
th { position: relative; height: 15px; padding: 0; font-weight: 400; font-size: 8px; line-height: 10px; border-right: 1px solid #e2e2e2; white-space: nowrap; }
.nets th { height: 25px; }
th:last-child { border-right: 0; }
.side-scroll th:last-child { border-right: 1px solid #e2e2e2; }
th.sorted::before { content: ""; position: absolute; left: calc(50% - 2px); top: 0; width: 4px; height: 4px; border: 1px solid #777; border-width: 1px 0 0 1px; transform: rotate(45deg); }
td { height: 11px; padding: 0 2px; text-align: right; line-height: 11px; }
td:first-child { text-align: left; overflow: hidden; white-space: nowrap; padding-right: 0; font-size: 8px; }
tbody tr:nth-child(even) { background: #f3f3f3; }
.picked { background: #0893d8; color: #fff; }
.vthumb { flex: none; width: 4px; height: 21px; margin: 0 4px 0 3px; background: #7c7c7c; border-radius: 2px; }
.htrack { display: block; height: 10px; background: #f5f5f5; padding-top: 3px; }
.hthumb { display: block; width: 41%; height: 4px; background: #787878; border-radius: 2px; }

.editor { flex: 1; min-width: 0; display: grid; grid-template-columns: 1fr 12px; grid-template-rows: 24px 1fr 11px; margin-left: 1px; background: #f4f4f4; }
.command { grid-column: 1 / -1; display: flex; align-items: center; padding: 0 3px 0 6px; background: #ededed; }
.command label { width: 89px; font-size: 8px; }
.command .box { height: 20px; border: 1px solid #4aa8dc; }
.canvas { position: relative; min-height: 0; overflow: hidden; background: #282828; }
.board { width: 100%; height: 100%; }
.vbar { width: 5px; margin: 1px 0 1px 4px; background: #858585; border-radius: 3px; }
.hbar { height: 4px; margin: 4px 0 0; background: #7c7c7c; border-radius: 2px; }
.side-tabs { position: absolute; right: 1px; top: 7px; display: flex; flex-direction: column; gap: 11px; }
.side-tabs button { display: flex; align-items: center; justify-content: center; gap: 6px; width: 19px; height: 102px; writing-mode: vertical-rl; background: #444; color: #f0f0f0; font-size: 8px; font-weight: 700; white-space: nowrap; }

.area { fill: #000; }
.trace { fill: none; stroke: #1177b4; stroke-width: 3.3; stroke-linejoin: round; stroke-linecap: round; }
.leg { stroke: #b0b0b0; stroke-width: 7; }
.silk { fill: none; stroke: #b8b8b8; stroke-width: 1; }
.bold { stroke-width: 1.6; }
.lead { stroke-width: 2; stroke: #aaa; }
.plate { stroke-width: 3; }
.faint { stroke: #777; }
.keepout { fill: url(#dots); stroke: #1b6e9c; }
.mount { fill: #282828; stroke: #d0d0c8; stroke-width: 1.2; }
.bore { stroke: #b8a860; }
.tabbox { stroke: #8a8a8a; }
.red { stroke: #b03a20; fill: none; }
.pad { fill: #43bd87; }
.drill { fill: #08402a; }
.drill.light { fill: #8ccfc0; }
.ring { fill: #3b97b8; stroke: #46bf8b; stroke-width: 2.2; }
.ring.open { fill: #000; }
.origin { stroke: #8c9428; fill: none; stroke-width: .8; }
.anchor { stroke: #999; fill: none; stroke-width: .8; }
.outline { fill: none; stroke: #cf9f2e; stroke-width: 3.5; }
.hatch { stroke: #e2cc6a; stroke-dasharray: 3 4; stroke-width: 2.5; }
.names { fill: #a8a8a8; font: 10px "Liberation Sans", sans-serif; }
.names .mid { font-size: 12px; }
.names .big { font-size: 15px; fill: #c4c4c4; }
.names .small { font-size: 8px; fill: #c4c4c4; }

.status { display: flex; align-items: center; gap: 4px; height: 18px; padding: 0 1px 0 4px; border-top: 1px solid #a8a8a8; font-family: "Open Sans", sans-serif; }
.status p { flex: 1; }

.taskbar { display: flex; align-items: center; height: 28px; color: #f0f0f0; font: 8px/11px "Open Sans", sans-serif; background: linear-gradient(90deg, #1d1820, #24142c 25%, #2e1440 55%, #24152f 80%, #1b1720); }
.apps { flex: 0 1 516px; height: 28px; display: grid; grid-template-columns: repeat(15, 1fr); }
.apps button { display: grid; place-items: center; margin: 0 3px; border-bottom: 2px solid transparent; }
.apps .open { border-color: #9c4fc4; }
.apps .current { margin: 0; background: #56405e; border-color: #9c4fc4; }
.net { display: grid; grid-template-columns: 44px 40px; margin-left: auto; }
.net dd { text-align: right; }
.tray { display: flex; align-items: center; gap: 6px; margin-left: 5px; }
time { width: 50px; margin-left: 4px; text-align: center; line-height: 12px; }
.notes { margin: 0 11px 0 9px; }
</style>
